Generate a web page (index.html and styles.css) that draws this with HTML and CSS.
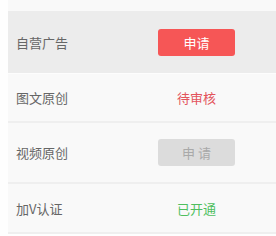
FILE: index.html
```html
<!DOCTYPE html>
<html lang="zh-CN">
<head>
    <meta charset="UTF-8">
    <meta name="viewport" content="width=device-width, initial-scale=1.0">
    <title>权限申请</title>
    <link rel="stylesheet" href="styles.css">
</head>
<body>
    <div class="list">
        <!-- 自营广告 -->
        <div class="row row-active">
            <span class="label">自营广告</span>
            <div class="status">
                <button class="btn-apply">申请</button>
            </div>
        </div>
        <!-- 图文原创 -->
        <div class="row row-short">
            <span class="label">图文原创</span>
            <div class="status"><span class="pending">待审核</span></div>
        </div>
        <!-- 视频原创 -->
        <div class="row">
            <span class="label">视频原创</span>
            <div class="status">
                <button class="btn-apply" disabled>申 请</button>
            </div>
        </div>
        <!-- 加V认证 -->
        <div class="row row-last">
            <span class="label">加V认证</span>
            <div class="status"><span class="opened">已开通</span></div>
        </div>
    </div>
</body>
</html>
```

FILE: styles.css
```css
body {
    font-family: "Noto Sans CJK SC", "Noto Sans", sans-serif;
    margin: 0;
    padding: 0;
    background-color: #fefefe;
}
.list {
    margin-left: 8px;
    padding-top: 11px;
    background-color: #f9f9f9;
}
.row {
    display: flex;
    align-items: center;
    height: 59px;
    padding-left: 8px;
    border-bottom: 2px solid #efefef;
}
.row-short {
    height: 47px;
}
.row-last {
    height: 48px;
}
.row-active {
    height: 62px;
    background-color: #ececec;
    border-bottom: 1px solid #fdfdfd;
}
.label {
    width: 142px;
    font-size: 13px;
    color: #666;
}
.status {
    width: 77px;
    text-align: center;
    font-size: 13px;
}
.btn-apply {
    display: block;
    width: 77px;
    height: 27px;
    border: none;
    border-radius: 3px;
    background-color: #f65656;
    color: white;
    font-family: inherit;
    font-size: 13px;
    padding: 0;
    cursor: pointer;
}
.btn-apply[disabled] {
    background-color: #dcdcdc;
    color: #a9a9a9;
    cursor: not-allowed;
}
.pending {
    color: #e3545c;
}
.opened {
    color: #4fbf5f;
}
```
